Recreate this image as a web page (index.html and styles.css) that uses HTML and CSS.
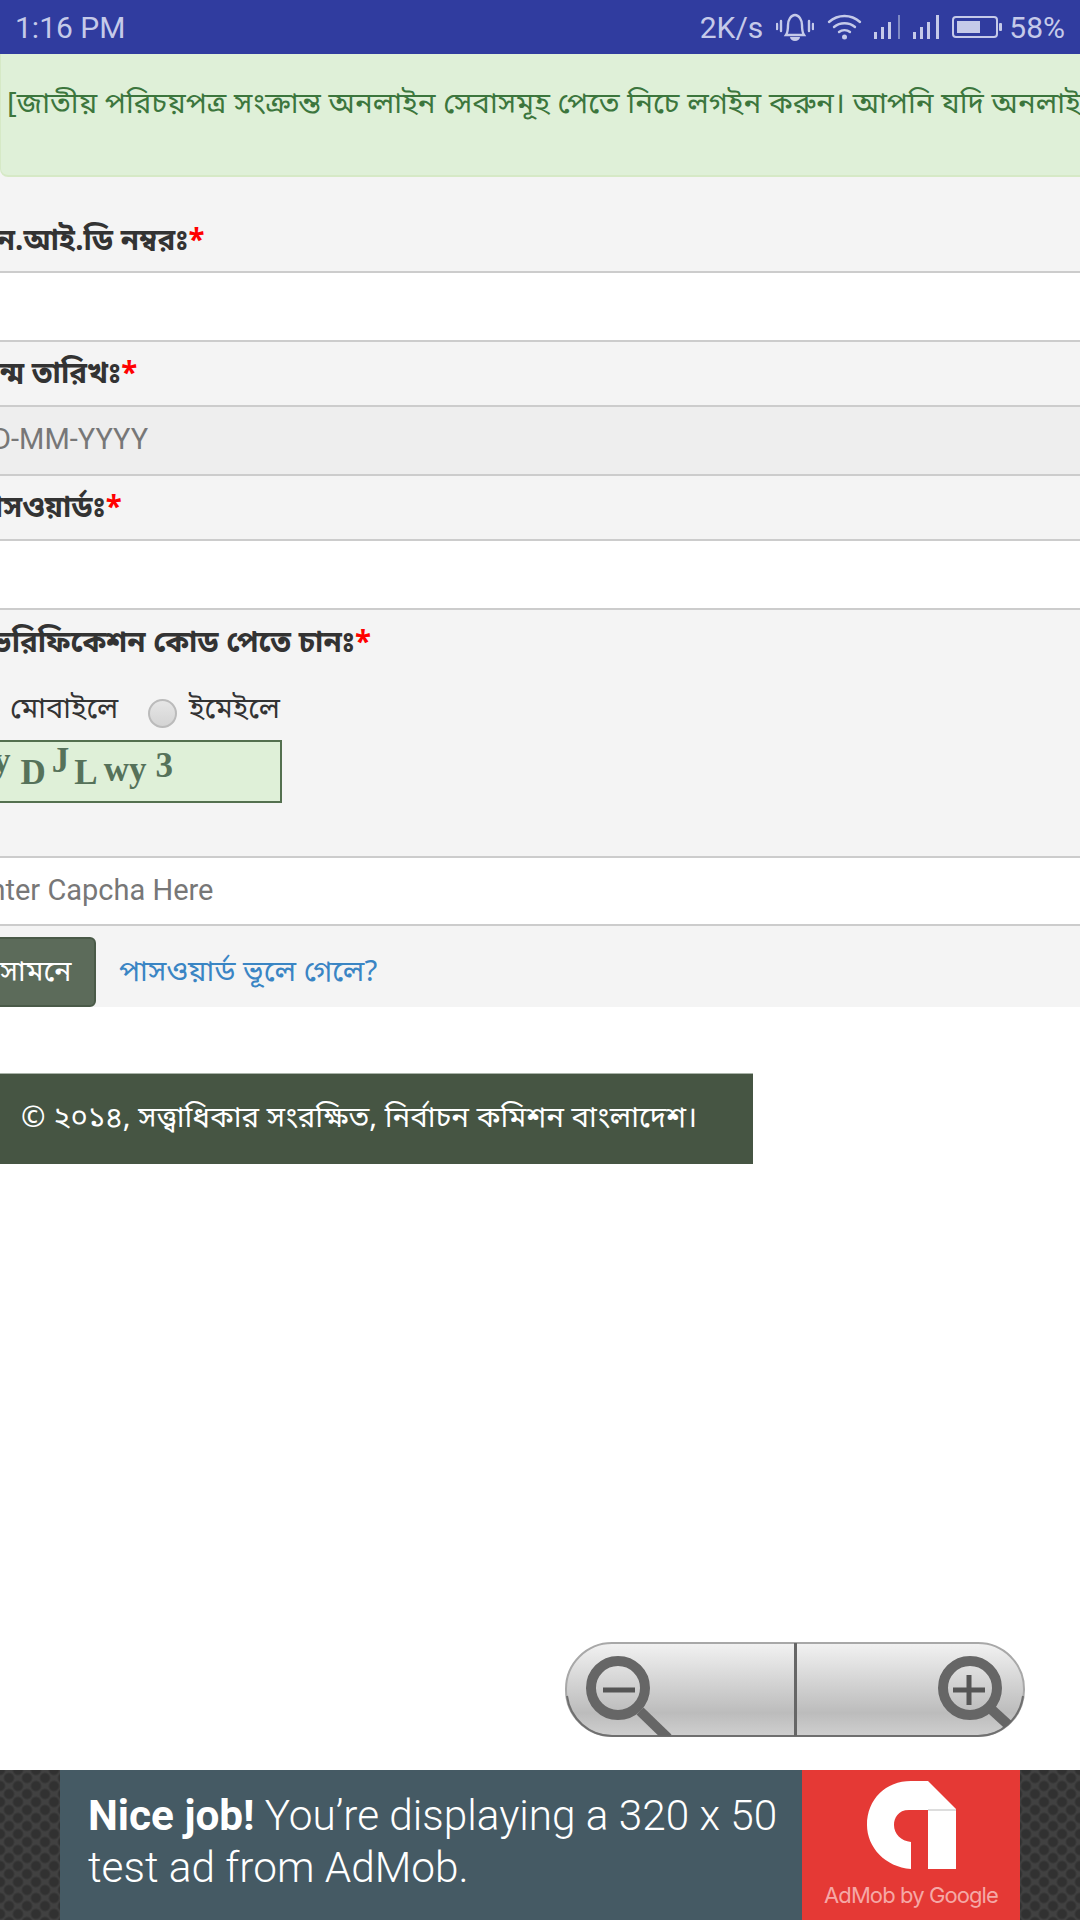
FILE: index.html
```html
<!DOCTYPE html>
<html lang="bn">
<head>
<meta charset="utf-8">
<title>NID Login</title>
<link rel="stylesheet" href="styles.css">
</head>
<body>
<header class="status">
  <span class="clock">1:16 PM</span>
  <div class="status-right">
    <span class="speed">2K/s</span>
    <svg class="ic-bell" viewBox="0 0 38 30"><g fill="none" stroke="#c5cae9" stroke-width="2.4" stroke-linecap="round"><path d="M10 23c2-3 2-6 2-10 0-5 3-10 7-10s7 5 7 10c0 4 0 7 2 10z"/><path d="M1 12v5M5 9v10M33 9v10M37 12v5"/></g><path d="M14 25h10a5 4 0 0 1-10 0z" fill="#c5cae9"/></svg>
    <svg class="ic-wifi" viewBox="0 0 35 26"><g fill="none" stroke="#c5cae9" stroke-width="2.4" stroke-linecap="round"><path d="M2 8c9-8 22-8 31 0"/><path d="M7 13c6-5 15-5 21 0"/><path d="M12 18c3-2.500 8-2.500 11 0"/></g><circle cx="17.500" cy="23" r="2.500" fill="#c5cae9"/></svg>
    <svg class="ic-signal" viewBox="0 0 27 24"><path d="M0 17h3v7H0zM7 12h3v12H7zM14 7h3v17h-3z" fill="#c5cae9"/><path d="M24 0h2v24h-2z" fill="#7f8ac4"/></svg>
    <svg class="ic-signal second" viewBox="0 0 27 24"><path d="M0 17h3v7H0zM7 12h3v12H7zM14 7h3v17h-3zM23 0h3v24h-3z" fill="#c5cae9"/></svg>
    <svg class="ic-battery" viewBox="0 0 50 22"><rect x="1" y="1" width="44" height="20" rx="3" fill="none" stroke="#c5cae9" stroke-width="2"/><rect x="5" y="5" width="23" height="12" fill="#c5cae9"/><rect x="47" y="7" width="3" height="8" rx="1" fill="#c5cae9"/></svg>
    <span class="percent">58%</span>
  </div>
</header>

<main class="page">
  <div class="panel">
    <div class="alert">[জাতীয় পরিচয়পত্র সংক্রান্ত অনলাইন সেবাসমূহ পেতে নিচে লগইন করুন। আপনি যদি অনলাইন সেবা</div>
    <div class="label label-first">এন.আই.ডি নম্বরঃ<span class="req">*</span></div>
    <div class="field"></div>
    <div class="label">জন্ম তারিখঃ<span class="req">*</span></div>
    <div class="field field-date">DD-MM-YYYY</div>
    <div class="label">পাসওয়ার্ডঃ<span class="req">*</span></div>
    <div class="field"></div>
    <div class="verify">
      <div class="label-plain">ভেরিফিকেশন কোড পেতে চানঃ<span class="req">*</span></div>
      <div class="radios">
        <span class="radio radio-off"></span><span class="radio-text">মোবাইলে</span>
        <span class="radio"></span><span class="radio-text">ইমেইলে</span>
      </div>
      <div class="captcha"><span class="c-y">y</span><span class="c-d">D</span><span class="c-j">J</span><span class="c-l">L</span><span class="c-w">wy</span><span class="c-3">3</span></div>
    </div>
    <div class="field field-captcha">Enter Capcha Here</div>
    <div class="actions">
      <span class="btn">সামনে</span>
      <a class="link">পাসওয়ার্ড ভূলে গেলে?</a>
    </div>
  </div>
  <footer class="foot">© ২০১৪, সত্ত্বাধিকার সংরক্ষিত, নির্বাচন কমিশন বাংলাদেশ।</footer>

  <svg class="zoom" viewBox="0 0 460 97" aria-hidden="true">
    <defs>
      <linearGradient id="zg" x1="0" y1="0" x2="0" y2="1"><stop offset="0" stop-color="#f2f2f2"/><stop offset=".75" stop-color="#bcbcbc"/><stop offset="1" stop-color="#cfcfcf"/></linearGradient>
      <clipPath id="zc"><rect x="1" y="2" width="458" height="93" rx="46"/></clipPath>
    </defs>
    <rect x="1" y="2" width="458" height="93" rx="46" fill="url(#zg)" stroke="#a8a8a8" stroke-width="2"/>
    <path d="M2 55a46 46 0 0 0 45 40h366a46 46 0 0 0 45-40" fill="none" stroke="#6f6f6f" stroke-width="2"/>
    <g clip-path="url(#zc)">
      <rect x="229" y="2" width="3" height="93" fill="#666"/>
      <g fill="none" stroke="#666" stroke-width="10"><circle cx="53" cy="47" r="27"/><circle cx="405" cy="47" r="27"/></g>
      <g fill="none" stroke="#666" stroke-width="10"><path d="M75 70l28 27"/><path d="M426 68l24 22"/></g>
      <g stroke="#555" stroke-width="5"><path d="M38 49h32M388 49h32M404 34v30"/></g>
    </g>
  </svg>
</main>

<aside class="ad">
  <div class="ad-inner">
    <p class="ad-text"><b>Nice job!</b> You’re displaying a 320 x 50 test ad from AdMob.</p>
    <div class="ad-brand">
      <svg class="ad-logo" viewBox="0 0 89 89"><path d="M44 88C18 86 0 66 0 44 0 18 19 0 44 0h17l28 28v60H61V29H42c-11 0-15 8-15 15 0 9 7 16 17 17z" fill="#fff"/><path d="M61 28h28v2H61z" fill="#ddd"/></svg>
      <span class="ad-name">AdMob by Google</span>
    </div>
  </div>
</aside>
</body>
</html>
```
FILE: styles.css
```css
* { box-sizing: border-box; }
html, body { margin: 0; height: 1920px; }
body {
  width: 1080px;
  display: flex;
  flex-direction: column;
  overflow: hidden;
  background: #fff;
  font-family: "Noto Sans", "Noto Sans Bengali", "Lohit Bengali", "FreeSans", "DejaVu Sans", sans-serif;
}
.status {
  height: 54px;
  flex: none;
  background: #303c9f;
  color: #c5cae9;
  font: 30px/55px Roboto, sans-serif;
  display: flex;
  justify-content: space-between;
  padding: 0 15px 0 15px;
}
.status-right { display: flex; align-items: center; }
.speed { margin-right: 13px; }
.ic-bell { width: 38px; height: 30px; margin-right: 13px; }
.ic-wifi { width: 35px; height: 26px; margin-right: 12px; }
.ic-signal { width: 27px; height: 24px; margin-right: 12px; }
.ic-battery { width: 50px; height: 22px; margin-right: 7px; }

.page { flex: 1; position: relative; overflow: hidden; }
.panel {
  width: 1140px;
  margin-left: -27px;
  background: #f4f4f4;
}
.alert {
  height: 123px;
  margin-left: 27px;
  padding: 28px 0 0 6px;
  background: #dff0d8;
  border: 1px solid #d6e9c6;
  border-width: 0 0 2px 1px;
  border-bottom-left-radius: 8px;
  color: #3c763d;
  font-size: 29.500px;
  line-height: 40px;
  white-space: nowrap;
  overflow: hidden;
}
.label, .label-plain {
  font-size: 29.500px;
  font-weight: 700;
  color: #333;
  line-height: 40px;
  white-space: nowrap;
}
.label { height: 63px; padding-top: 10px; }
.label-first { height: 94px; padding: 42px 0 0 2px; }
.label-plain { padding-left: 6px; }
.req { color: #f00; }
.field {
  height: 71px;
  background: #fff;
  border-top: 2px solid #ccc;
  border-bottom: 2px solid #ccc;
  color: #777;
  font: 29px/64px Roboto, sans-serif;
}
.field-date { background: #eee; }
.verify { height: 246px; padding-top: 11px; }
.radios {
  display: flex;
  align-items: center;
  margin-top: 24px;
  height: 46px;
  font-size: 29px;
  color: #333;
}
.radio {
  width: 29px;
  height: 29px;
  margin: 11px 12px 0 0;
  border-radius: 50%;
  border: 2px solid #bbb;
  background: linear-gradient(#e6e6e6, #d4d4d4);
  flex: none;
}
.radio-off { margin: 0 10px 0 -2px; }
.radio-text { margin-right: 30px; }
.captcha {
  width: 309px;
  height: 63px;
  margin-top: 9px;
  background: #dff0d8;
  border: 2px solid #54704f;
  padding-left: 18px;
  color: #56725a;
  font: 700 35px/37px "Liberation Serif", serif;
  white-space: nowrap;
}
.c-y { vertical-align: 9px; }
.c-d { vertical-align: -3px; margin-left: 10px; }
.c-j { vertical-align: 9px; margin-left: 6px; }
.c-l { vertical-align: -3px; margin-left: 5px; }
.c-w { margin-left: 6px; }
.c-3 { vertical-align: 4px; margin-left: 9px; }
.field-captcha { height: 70px; }
.actions {
  height: 81px;
  display: flex;
  align-items: flex-start;
  padding-top: 11px;
  gap: 23px;
}
.btn {
  width: 123px;
  height: 70px;
  border-radius: 6px;
  background: #5c6b5a;
  border: 2px solid #4a5a48;
  color: #fff;
  font-size: 29px;
  line-height: 62px;
  padding-left: 25px;
}
.link { color: #3a85c4; font-size: 29.500px; line-height: 66px; }
.foot {
  width: 753px;
  height: 91px;
  margin-top: 66px;
  padding-left: 21px;
  background: #465543;
  border-top: 1px solid #a9b3a8;
  color: #fff;
  font-size: 29.400px;
  line-height: 85px;
  white-space: nowrap;
}
.zoom { position: absolute; left: 565px; top: 1587px; width: 460px; height: 97px; filter: blur(0.6px); }

.ad {
  height: 150px;
  flex: none;
  background-color: #414141;
  background-image:
    radial-gradient(circle at 9px 8px, #313131 4px, transparent 6px),
    radial-gradient(circle at 0 0, #313131 4px, transparent 6px),
    radial-gradient(circle at 18px 0, #313131 4px, transparent 6px),
    radial-gradient(circle at 0 16px, #313131 4px, transparent 6px),
    radial-gradient(circle at 18px 16px, #313131 4px, transparent 6px);
  background-size: 18px 16px;
  display: flex;
  justify-content: center;
}
.ad-inner { width: 960px; display: flex; background: #455a64; }
.ad-text {
  flex: 1;
  margin: 0;
  padding: 20px 10px 0 28px;
  color: #fff;
  font: 300 42.300px/52px Roboto, sans-serif;
}
.ad-text b { font-weight: 700; }
.ad-brand {
  width: 218px;
  background: #e53935;
  display: flex;
  flex-direction: column;
  align-items: center;
  padding-top: 11px;
}
.ad-logo { width: 89px; height: 89px; }
.ad-name { margin-top: 11px; color: #f5a8a6; font: 400 22px/28px Inter, sans-serif; letter-spacing: -0.9px; white-space: nowrap; }
```
